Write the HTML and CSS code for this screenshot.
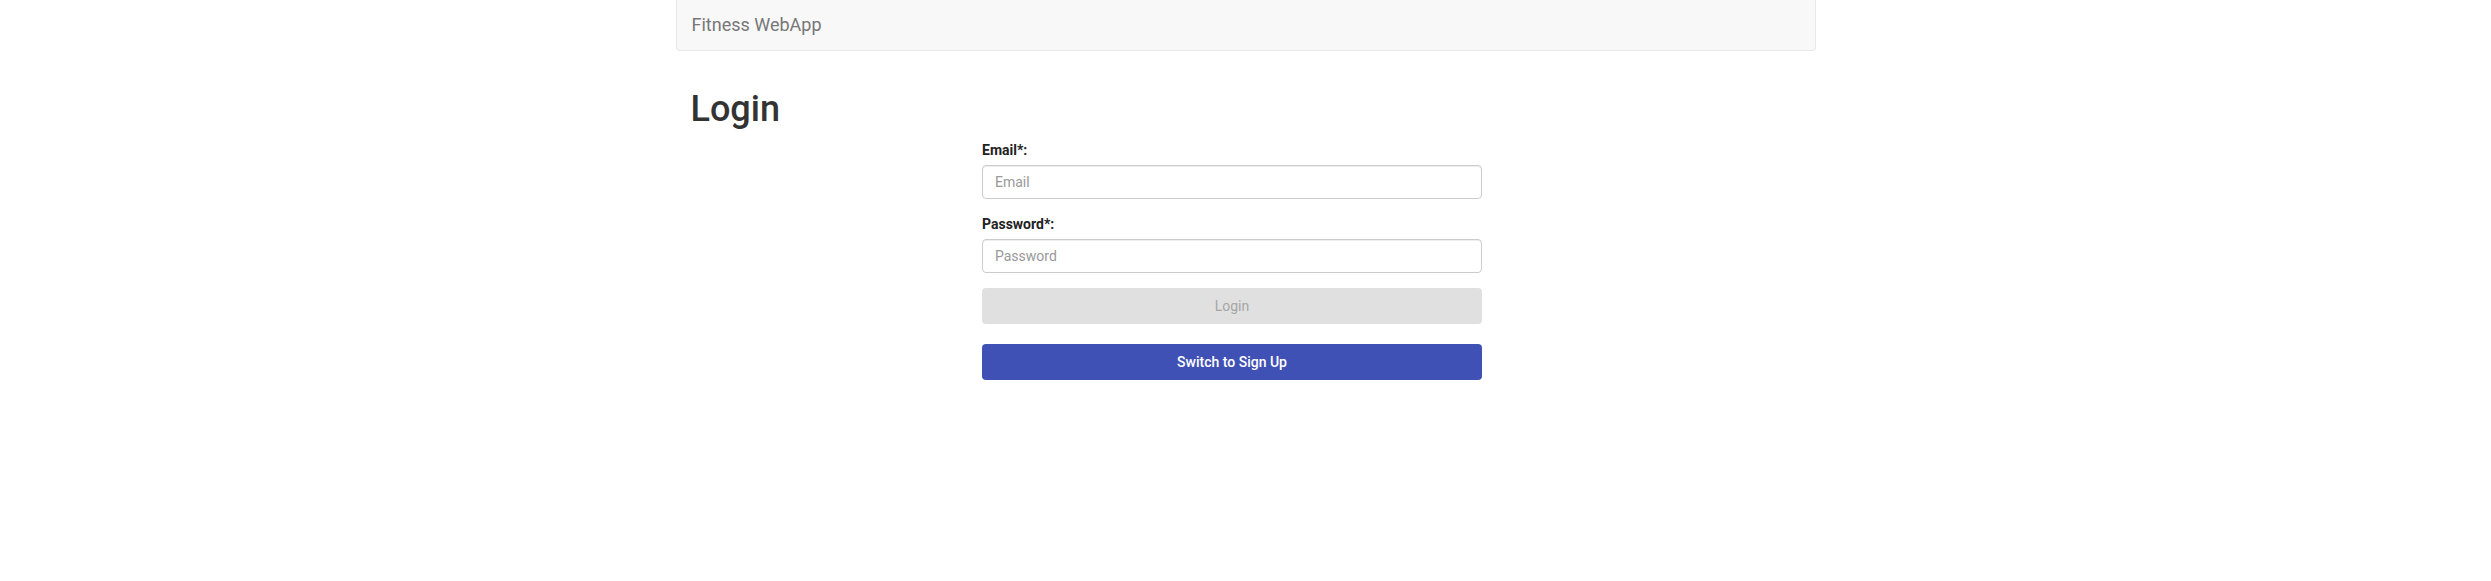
FILE: index.html
```html
<!DOCTYPE html>
<html lang="en">
<head>
<meta charset="utf-8">
<title>Fitness WebApp</title>
<link rel="stylesheet" href="styles.css">
</head>
<body>
<div class="container">
  <nav class="navbar">
    <span class="brand">Fitness WebApp</span>
  </nav>
  <main class="main">
    <h1 class="title">Login</h1>
    <form class="login-form">
      <div class="form-group">
        <label class="label" for="email">Email*:</label>
        <input class="input" id="email" type="email" placeholder="Email">
      </div>
      <div class="form-group">
        <label class="label" for="password">Password*:</label>
        <input class="input" id="password" type="password" placeholder="Password">
      </div>
      <button class="btn btn-disabled" type="button" disabled>Login</button>
      <button class="btn btn-primary" type="button">Switch to Sign Up</button>
    </form>
  </main>
</div>
</body>
</html>
```

FILE: styles.css
```css
* { box-sizing: border-box; }
html, body { margin: 0; padding: 0; background: #fff; }
body {
  font-family: Roboto, "Liberation Sans", sans-serif;
  font-size: 14px;
  line-height: 1.42857;
  color: #333;
}
.container {
  width: 1170px;
  margin: 0 auto;
  padding: 0 15px;
}
.navbar {
  display: flex;
  align-items: center;
  height: 51px;
  background: #f8f8f8;
  border: 1px solid #e7e7e7;
  border-top: 0;
  border-radius: 0 0 4px 4px;
  margin-bottom: 20px;
}
.brand {
  padding: 15px;
  font-size: 18px;
  line-height: 20px;
  color: #777;
}
.main {
  padding: 19px 15px 0;
}
.title {
  margin: 0 0 10px;
  font-size: 36px;
  font-weight: 500;
  line-height: 1.1;
  color: #333;
}
.login-form {
  width: 500px;
  margin-left: 291.5px;
  display: flex;
  flex-direction: column;
}
.form-group {
  display: flex;
  flex-direction: column;
  margin-bottom: 15px;
}
.label {
  font-weight: 700;
  font-size: 14px;
  line-height: 20px;
  margin-bottom: 5px;
  color: #222;
}
.input {
  height: 34px;
  padding: 6px 12px;
  font-family: Roboto, "Liberation Sans", sans-serif;
  font-size: 14px;
  color: #555;
  background: #fff;
  border: 1px solid #ccc;
  border-radius: 4px;
  box-shadow: inset 0 1px 1px rgba(0,0,0,.075);
  outline: none;
}
.input::placeholder { color: #999; }
.btn {
  height: 36px;
  border: 0;
  border-radius: 4px;
  font-family: Roboto, "Liberation Sans", sans-serif;
  font-size: 14px;
  font-weight: 500;
  padding: 0 16px;
}
.btn-disabled {
  background: #e0e0e0;
  color: #a6a6a6;
  font-weight: 400;
}
.btn-primary {
  margin-top: 20px;
  background: #3f51b5;
  color: #fff;
}
```
